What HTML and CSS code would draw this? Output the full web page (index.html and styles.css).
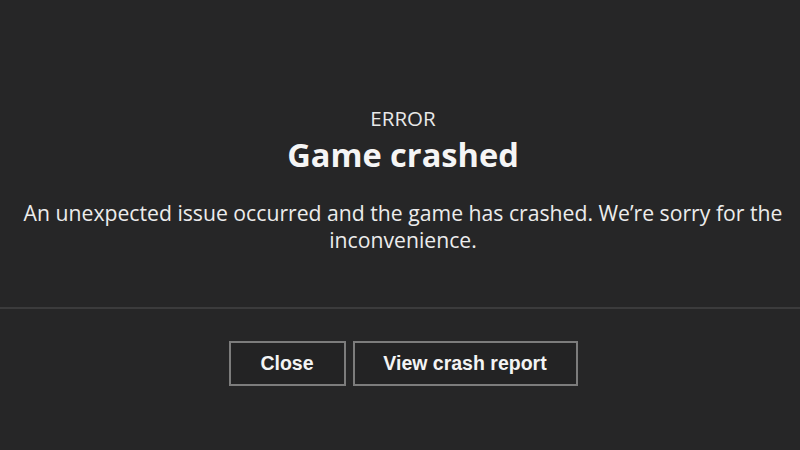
FILE: index.html
```html
<!DOCTYPE html>
<html lang="en">
<head>
<meta charset="utf-8">
<link rel="stylesheet" href="styles.css">
</head>
<body>
<div class="dialog">
  <div class="content">
    <div class="kicker">ERROR</div>
    <h1 class="title">Game crashed</h1>
    <p class="message">An unexpected issue occurred and the game has crashed. We’re sorry for the inconvenience.</p>
  </div>
  <div class="divider"></div>
  <div class="actions">
    <button class="btn btn-close">Close</button>
    <button class="btn btn-report">View crash report</button>
  </div>
</div>
</body>
</html>
```
FILE: styles.css
```css
html, body {
  margin: 0;
  padding: 0;
  background: #262627;
  width: 800px;
  height: 450px;
  overflow: hidden;
}
.dialog {
  display: flex;
  flex-direction: column;
  height: 450px;
  font-family: "Open Sans", "Noto Sans", sans-serif;
  color: #f2f2f2;
}
.content {
  display: flex;
  flex-direction: column;
  align-items: center;
  text-align: center;
  padding-top: 104px;
  padding-left: 6px;
  height: 307px;
  box-sizing: border-box;
  flex-shrink: 0;
}
.kicker {
  font-size: 20.5px;
  line-height: 28px;
  color: #e8e8e8;
}
.title {
  margin: 3px 0 0 0;
  font-size: 32.6px;
  line-height: 40px;
  font-weight: 700;
  color: #f5f5f5;
}
.message {
  margin: 24px 0 0 0;
  font-size: 21.2px;
  line-height: 27px;
  color: #ececec;
  width: 794px;
}
.divider {
  height: 2px;
  background: #3b3b3c;
  flex-shrink: 0;
}
.actions {
  display: flex;
  justify-content: center;
  gap: 7px;
  padding-top: 32px;
  padding-left: 6px;
}
.btn {
  font-family: "Liberation Sans", Arial, sans-serif;
  font-weight: 700;
  font-size: 19.5px;
  color: #f4f4f4;
  background: #232324;
  border: 2px solid #7c7c7c;
  height: 45px;
  padding: 0;
  box-sizing: border-box;
}
.btn-close { width: 117px; }
.btn-report { width: 225px; }
```
